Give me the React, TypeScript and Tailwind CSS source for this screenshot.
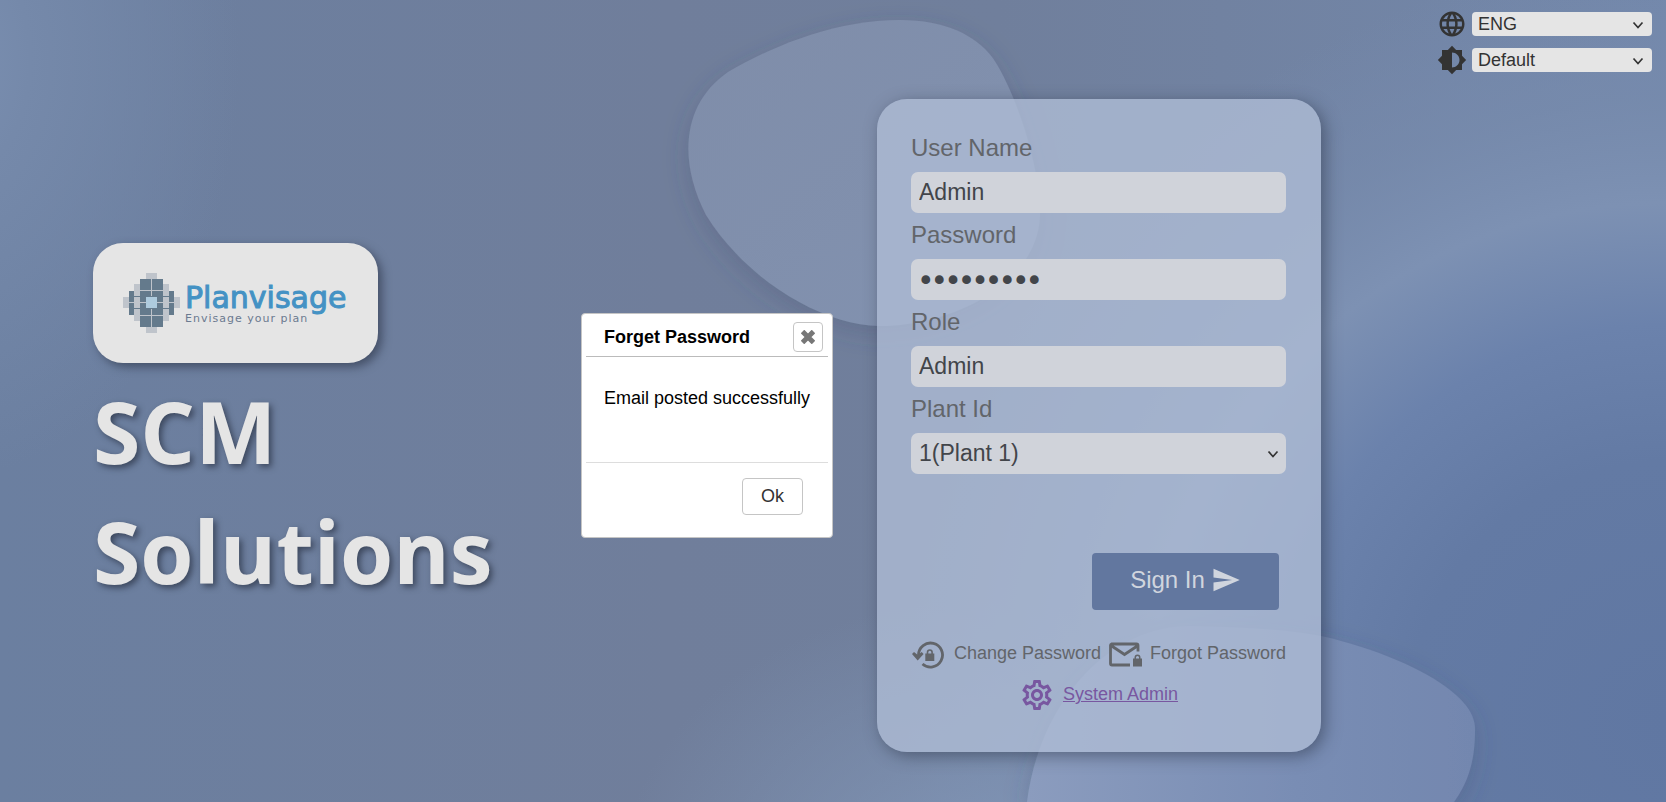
import React, { useState } from 'react';
import { MdBrightness6, MdLanguage, MdOutlineSettings, MdSend } from 'react-icons/md';

const FIELDS = [
  { id: 'userName', label: 'User Name', type: 'text', value: 'Admin', font: '' },
  { id: 'password', label: 'Password', type: 'password', value: 'admin1234', font: "font-['DejaVu_Sans',sans-serif] [-webkit-text-stroke:2px_#42454a]" },
  { id: 'role', label: 'Role', type: 'text', value: 'Admin', font: '' },
];

function Chevron({ className }: { className: string }) {
  return (
    <svg viewBox="0 0 12 8" fill="none" stroke="#333" strokeWidth="1.700" className={`absolute pointer-events-none ${className}`}>
      <path d="M1.500 1.500L6 6.500l4.500-5" />
    </svg>
  );
}

function LockResetIcon() {
  return (
    <svg width="34" height="36" viewBox="-1 -4.500 34 36" className="shrink-0">
      <path d="M6.500 13.500A12 12 0 1 1 10.500 22.500" fill="none" stroke="currentColor" strokeWidth="2.800" />
      <path d="M0 12.500l2-2 3.800 3 3.900-3 1.900 2L5.700 19z" fill="currentColor" />
      <path d="M14.700 12v-1.200a3.100 3.100 0 0 1 6.200 0V12h1.400v7.600h-9V12zm1.600 0h3v-1.200a1.500 1.500 0 0 0-3 0z" fill="currentColor" fillRule="evenodd" />
    </svg>
  );
}

function MailLockIcon() {
  return (
    <svg width="34" height="36" viewBox="0 -5.500 34 36" className="shrink-0">
      <path d="M29 9V3a1.500 1.500 0 0 0-1.500-1.500h-25A1.500 1.500 0 0 0 1.500 3v18a1.500 1.500 0 0 0 1.500 1.500h18M2 3l13.500 9L29 3" fill="none" stroke="currentColor" strokeWidth="2.800" />
      <path d="M25.500 16v-1a3 3 0 0 1 6 0v1H33v8h-9v-8zm1.500 0h3v-1a1.500 1.500 0 0 0-3 0z" fill="currentColor" fillRule="evenodd" />
    </svg>
  );
}

// Mosaic mark: light tiles behind, dark tiles in front
function LogoMark() {
  return (
    <svg width="57" height="60" viewBox="0 0 57 60" className="shrink-0">
      <g fill="#bfc4cb">
        <rect x="23" y="0" width="11" height="60" />
        <rect x="11" y="11" width="35" height="37" />
        <rect x="0" y="24" width="57" height="11" />
      </g>
      <g fill="#647a8c">
        <rect x="17" y="6" width="11" height="11" />
        <rect x="29" y="6" width="11" height="11" />
        <rect x="17" y="18" width="11" height="11" />
        <rect x="29" y="18" width="11" height="11" />
        <rect x="17" y="30" width="11" height="12" />
        <rect x="29" y="30" width="11" height="12" />
        <rect x="6" y="18" width="5" height="11" />
        <rect x="6" y="30" width="5" height="12" />
        <rect x="46" y="18" width="5" height="11" />
        <rect x="46" y="30" width="5" height="12" />
        <rect x="17" y="43" width="11" height="11" />
        <rect x="29" y="43" width="11" height="11" />
        <rect x="6" y="23" width="45" height="1" />
        <rect x="6" y="35" width="45" height="1" />
      </g>
      <rect x="23" y="24" width="11" height="11" fill="#aecbde" />
    </svg>
  );
}

function Backdrop() {
  return (
    <svg viewBox="0 0 1666 802" preserveAspectRatio="none" className="absolute inset-0 w-full h-full">
      <defs>
        <linearGradient id="base" x1="0" y1="0" x2="1" y2="0">
          <stop offset="0" stopColor="#6b7fa0" />
          <stop offset="0.4" stopColor="#707e9b" />
          <stop offset="0.6" stopColor="#707f9c" />
          <stop offset="1" stopColor="#7388ab" />
        </linearGradient>
        <radialGradient id="left" gradientUnits="userSpaceOnUse" cx="0" cy="0" r="1" gradientTransform="translate(-60 60) scale(300 420)">
          <stop offset="0" stopColor="#7b90b2" />
          <stop offset="0.3" stopColor="#7589aa" />
          <stop offset="1" stopColor="#7589aa" stopOpacity="0" />
        </radialGradient>
        <radialGradient id="right" gradientUnits="userSpaceOnUse" cx="1666" cy="720" r="760">
          <stop offset="0" stopColor="#6077a2" />
          <stop offset="0.340" stopColor="#637aa4" />
          <stop offset="0.520" stopColor="#6b82ac" />
          <stop offset="0.680" stopColor="#7d91b3" />
          <stop offset="0.820" stopColor="#778bad" stopOpacity="0.7" />
          <stop offset="1" stopColor="#768aae" stopOpacity="0" />
        </radialGradient>
        <radialGradient id="bottom" gradientUnits="userSpaceOnUse" cx="0" cy="0" r="1" gradientTransform="translate(980 880) scale(360 280)">
          <stop offset="0" stopColor="#8296b7" />
          <stop offset="1" stopColor="#7f94b4" stopOpacity="0" />
        </radialGradient>
        <linearGradient id="blobTop" x1="0" y1="0" x2="1" y2="1">
          <stop offset="0" stopColor="#7f8da9" />
          <stop offset="1" stopColor="#8292b0" />
        </linearGradient>
        <linearGradient id="blobBottom" x1="0" y1="0" x2="1" y2="0">
          <stop offset="0" stopColor="#8b9cbe" />
          <stop offset="0.600" stopColor="#798db4" />
          <stop offset="1" stopColor="#7387af" />
        </linearGradient>
        <filter id="blobShadow" x="-20%" y="-20%" width="140%" height="140%">
          <feDropShadow dx="0" dy="8" stdDeviation="12" floodColor="#3c4a66" floodOpacity="0.25" />
        </filter>
      </defs>
      <rect width="1666" height="802" fill="url(#base)" />
      <rect width="1666" height="802" fill="url(#left)" />
      <rect width="1666" height="802" fill="url(#right)" />
      <rect width="1666" height="802" fill="url(#bottom)" />
      <g filter="url(#blobShadow)">
        <path d="M728 72C780 42 840 20 900 20C945 20 975 35 992 57C1012 85 1040 160 1040 215C1038 285 950 326 880 326C820 325 745 278 706 215C678 160 682 104 728 72Z" fill="url(#blobTop)" />
        <path d="M1027 802C1040 700 1110 626 1190 626C1245 627 1290 630 1321 636C1375 648 1425 670 1450 690C1470 706 1475 718 1475 730C1475 765 1466 785 1454 802Z" fill="url(#blobBottom)" />
      </g>
    </svg>
  );
}

function HeaderSelect({ id, label, value, icon }: { id: string; label: string; value: string; icon: React.ReactNode }) {
  return (
    <div className="flex items-center gap-[5px]">
      <label htmlFor={id} aria-label={label} className="text-[#333]">{icon}</label>
      <div className="relative">
        <select id={id} className="block w-[180px] h-6 pl-[6px] rounded-[4px] bg-[#e5e5e5] text-[#333] text-lg leading-6 appearance-none">
          <option>{value}</option>
        </select>
        <Chevron className="right-2 top-[9px] w-3 h-2" />
      </div>
    </div>
  );
}

function Dialog({ onClose }: { onClose: () => void }) {
  return (
    <div role="dialog" aria-labelledby="dialogTitle" className="absolute z-20 left-1/2 top-1/2 -translate-x-[252px] -translate-y-[88px] w-[252px] h-[225px] flex flex-col px-1 bg-white border border-[#c5c5c5] rounded-[4px] text-lg leading-6 text-black">
      <div className="flex items-center justify-between h-[43px] pt-1 pl-[18px] pr-[5px] border-b border-[#bbb]">
        <h2 id="dialogTitle" className="font-bold">Forget Password</h2>
        <button onClick={onClose} aria-label="Close" className="w-[30px] h-[30px] flex items-center justify-center bg-white border border-[#c5c5c5] rounded-[4px]">
          <svg width="14" height="14" viewBox="0 0 14 14" stroke="#777" strokeWidth="5">
            <path d="M1.500 1.500l11 11M12.500 1.500l-11 11" />
          </svg>
        </button>
      </div>
      <p className="flex-1 pl-[18px] pt-[29px] whitespace-nowrap">Email posted successfully</p>
      <div className="flex justify-end h-[75px] pt-[15px] pr-[25px] border-t border-[#ddd]">
        <button onClick={onClose} className="w-[61px] h-[37px] pb-[2px] bg-white border border-[#c5c5c5] rounded-[4px] text-[#333]">Ok</button>
      </div>
    </div>
  );
}

export default function App() {
  const [dialogOpen, setDialogOpen] = useState(true);

  return (
    <div className="relative min-h-screen overflow-hidden bg-[#6d7d9b] font-['Liberation_Sans',Arial,sans-serif]">
      <Backdrop />

      <div className="absolute z-10 right-[14px] top-[9px] flex flex-col gap-[6px]">
        <HeaderSelect id="language" label="Language" value="ENG" icon={<MdLanguage size={30} />} />
        <HeaderSelect id="theme" label="Theme" value="Default" icon={<MdBrightness6 size={30} />} />
      </div>

      <main className="relative min-h-screen flex items-start pl-[93px]">
        <section className="w-[784px] shrink-0 pt-[243px]">
          <div className="w-[285px] h-[120px] pl-[30px] flex items-center rounded-[30px] bg-[#e5e5e5] shadow-[4px_4px_10px_rgba(40,48,66,0.6)]">
            <LogoMark />
            <div className="pt-1 pl-[5px] font-['DejaVu_Sans',sans-serif] whitespace-nowrap">
              <div className="text-[30px] leading-7 text-[#4492c4] [-webkit-text-stroke:1px_#4492c4]">Planvisage</div>
              <div className="text-[11px] leading-[14px] tracking-[1px] text-[#6b7a90]">Envisage your plan</div>
            </div>
          </div>
          <h1 className="mt-2 font-['Open_Sans',sans-serif] font-bold text-[86px] leading-[120px] text-[#e5e5e5] [text-shadow:3px_3px_6px_rgba(40,48,66,0.7)]">
            SCM
            <br />
            Solutions
          </h1>
        </section>

        <form className="mt-[99px] w-[444px] h-[653px] shrink-0 pl-[34px] pr-[35px] pt-[27px] rounded-[30px] bg-[#aebcd5]/80 shadow-[4px_4px_16px_rgba(40,48,66,0.5)]" onSubmit={(e) => e.preventDefault()}>
          {FIELDS.map((f) => (
            <div key={f.id}>
              <label htmlFor={f.id} className="block h-[46px] text-2xl leading-[44px] text-[#62656a]">{f.label}</label>
              <input id={f.id} type={f.type} defaultValue={f.value} className={`block w-full h-[41px] px-2 rounded-[7px] bg-[#d0d3da] text-[23px] text-[#42454a] ${f.font}`} />
            </div>
          ))}
          <label htmlFor="plant" className="block h-[46px] text-2xl leading-[44px] text-[#62656a]">Plant Id</label>
          <div className="relative">
            <select id="plant" className="block w-full h-[41px] px-2 rounded-[7px] bg-[#d0d3da] text-[23px] text-[#42454a] appearance-none">
              <option>1(Plant 1)</option>
            </select>
            <Chevron className="right-[7px] top-[17px] w-3 h-2" />
          </div>

          <div className="mt-[79px] flex justify-end pr-[7px]">
            <button type="submit" className="w-[187px] h-[57px] pb-1 flex items-center justify-center gap-[6px] rounded-[4px] bg-[#62779f] text-2xl text-[#d0d5de]">
              Sign In
              <MdSend size={30} />
            </button>
          </div>

          <div className="mt-[27px] flex items-start justify-between text-lg leading-8 text-[#62656a] whitespace-nowrap">
            <button type="button" className="flex items-start gap-[9px]">
              <LockResetIcon />
              Change Password
            </button>
            <button type="button" className="flex items-start gap-[7px]" onClick={() => setDialogOpen(true)}>
              <MailLockIcon />
              Forgot Password
            </button>
          </div>
          <div className="mt-1 flex justify-center">
            <a href="#system-admin" className="flex items-start gap-2 text-lg leading-[34px] text-[#7857a0]">
              <MdOutlineSettings size={36} />
              <span className="underline">System Admin</span>
            </a>
          </div>
        </form>
      </main>

      {dialogOpen && <Dialog onClose={() => setDialogOpen(false)} />}
    </div>
  );
}
